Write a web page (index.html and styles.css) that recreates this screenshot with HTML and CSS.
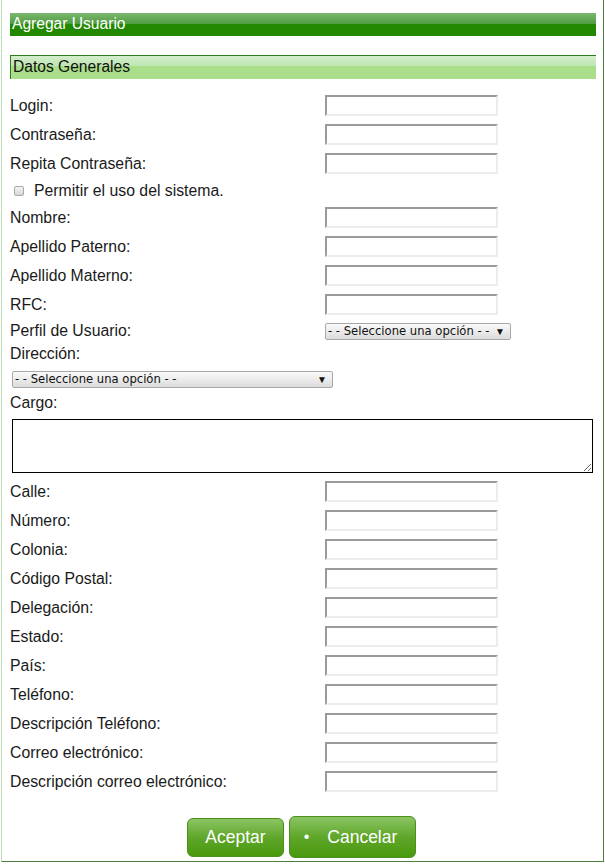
FILE: index.html
```html
<!DOCTYPE html>
<html lang="es">
<head>
<meta charset="utf-8">
<title>Agregar Usuario</title>
<link rel="stylesheet" href="styles.css">
</head>
<body>
<div class="panel">
  <div class="title-bar">Agregar Usuario</div>
  <div class="section-bar">Datos Generales</div>
  <form class="form">
    <div class="row"><label>Login:</label><input type="text" class="field"></div>
    <div class="row"><label>Contraseña:</label><input type="password" class="field"></div>
    <div class="row"><label>Repita Contraseña:</label><input type="password" class="field"></div>
    <div class="check-row"><input type="checkbox" class="check"><span>Permitir el uso del sistema.</span></div>
    <div class="row"><label>Nombre:</label><input type="text" class="field"></div>
    <div class="row"><label>Apellido Paterno:</label><input type="text" class="field"></div>
    <div class="row"><label>Apellido Materno:</label><input type="text" class="field"></div>
    <div class="row"><label>RFC:</label><input type="text" class="field"></div>
    <div class="row row-select"><label>Perfil de Usuario:</label>
      <span class="select-wrap select-short"><select class="select"><option>- - Seleccione una opción - -</option></select></span>
    </div>
    <div class="block-label">Dirección:</div>
    <span class="select-wrap select-long"><select class="select"><option>- - Seleccione una opción - -</option></select></span>
    <div class="block-label cargo">Cargo:</div>
    <textarea class="area"></textarea>
    <div class="rows-bottom">
      <div class="row"><label>Calle:</label><input type="text" class="field"></div>
      <div class="row"><label>Número:</label><input type="text" class="field"></div>
      <div class="row"><label>Colonia:</label><input type="text" class="field"></div>
      <div class="row"><label>Código Postal:</label><input type="text" class="field"></div>
      <div class="row"><label>Delegación:</label><input type="text" class="field"></div>
      <div class="row"><label>Estado:</label><input type="text" class="field"></div>
      <div class="row"><label>País:</label><input type="text" class="field"></div>
      <div class="row"><label>Teléfono:</label><input type="text" class="field"></div>
      <div class="row"><label>Descripción Teléfono:</label><input type="text" class="field"></div>
      <div class="row"><label>Correo electrónico:</label><input type="text" class="field"></div>
      <div class="row"><label>Descripción correo electrónico:</label><input type="text" class="field"></div>
    </div>
    <div class="buttons">
      <button type="button" class="btn btn-ok">Aceptar</button>
      <button type="button" class="btn btn-cancel"><span class="dot">•</span>Cancelar</button>
    </div>
  </form>
</div>
</body>
</html>
```

FILE: styles.css
```css
html, body {
  margin: 0;
  padding: 0;
  background: #fff;
}
body {
  font-family: "Liberation Sans", Arial, sans-serif;
  font-size: 15.8px;
  color: #1a1a1a;
}
.panel {
  box-sizing: border-box;
  margin-left: 1px;
  width: 603px;
  height: 862px;
  border-left: 1px solid #bfe0bb;
  border-right: 1px solid #4f7d3e;
  border-bottom: 1px solid #4f7d3e;
  padding: 13px 7px 0 8px;
}
.title-bar {
  height: 23px;
  line-height: 21px;
  padding-left: 2px;
  color: #fff;
  font-size: 15.6px;
  background: linear-gradient(to bottom, #7cb86f 0%, #4f9b40 48%, #228800 48%, #228800 100%);
}
.section-bar {
  margin-top: 19px;
  height: 24px;
  box-sizing: border-box;
  border-top: 1px solid #2e7d1c;
  border-left: 1px solid #2e7d1c;
  line-height: 22px;
  padding-left: 2px;
  color: #111;
  font-size: 15.6px;
  background: linear-gradient(to bottom, #d3edcc 0%, #bde6b0 45%, #aade8a 45%, #aade8a 100%);
}
.form {
  margin: 12px 0 0 0;
  padding-left: 0;
}
.row {
  display: grid;
  grid-template-columns: 315px auto;
  justify-content: start;
  align-items: center;
  height: 29px;
}
.row label {
  white-space: nowrap;
}
.field {
  box-sizing: border-box;
  width: 173px;
  height: 21px;
  margin: 0;
  padding: 0 2px;
  border-top: 2px solid #9a9a9a;
  border-left: 2px solid #9a9a9a;
  border-bottom: 2px solid #ececec;
  border-right: 2px solid #ececec;
  background: #fff;
  font: 13px "Liberation Sans", Arial, sans-serif;
}
.check-row {
  display: flex;
  align-items: center;
  height: 25px;
  padding-left: 3px;
}
.check {
  appearance: none;
  -webkit-appearance: none;
  box-sizing: border-box;
  width: 10px;
  height: 10px;
  margin: 0 10px 0 1px;
  border: 1px solid #aaa;
  border-radius: 2px;
  background: linear-gradient(to bottom, #f4f4f4, #d6d6d6);
}
.row-select {
  height: 24px;
}
.select-wrap {
  position: relative;
  display: inline-block;
  justify-self: start;
}
.select-wrap::after {
  content: "\25BC";
  position: absolute;
  right: 6px;
  top: 2px;
  font-size: 10px;
  line-height: 13px;
  color: #111;
  pointer-events: none;
}
.select {
  display: block;
  appearance: none;
  -webkit-appearance: none;
  box-sizing: border-box;
  height: 17px;
  margin: 0;
  padding: 0 0 0 2px;
  border: 1px solid #a8a8a8;
  border-radius: 2px;
  background: linear-gradient(to bottom, #fafafa, #dcdcdc);
  font: 11.6px "DejaVu Sans", "Liberation Sans", sans-serif;
  line-height: 15px;
  color: #111;
}
.select-short .select {
  width: 186px;
}
.select-long {
  display: block;
  margin: 6px 0 0 2px;
  width: 321px;
}
.select-long .select {
  width: 321px;
}
.block-label {
  height: 22px;
  line-height: 22px;
}
.cargo {
  margin-top: 4px;
}
.area {
  display: block;
  box-sizing: border-box;
  width: 581px;
  height: 54px;
  margin: 5px 0 0 2px;
  border: 1px solid #000;
  resize: vertical;
  font: 13px "Liberation Sans", Arial, sans-serif;
}
.rows-bottom {
  margin-top: 4px;
}
.buttons {
  display: flex;
  justify-content: center;
  align-items: center;
  gap: 5px;
  margin-top: 20px;
  padding-right: 3px;
}
.btn {
  box-sizing: border-box;
  border: 1px solid #4b8f1c;
  border-radius: 6px;
  color: #fff;
  font: 17.5px "Liberation Sans", Arial, sans-serif;
  background: linear-gradient(to bottom, #8cc563 0%, #5fa62b 50%, #49990d 100%);
  padding: 0;
}
.btn-ok {
  width: 97px;
  height: 39px;
}
.btn-cancel {
  width: 127px;
  height: 42px;
  display: flex;
  align-items: center;
  justify-content: center;
  gap: 0;
}
.dot {
  margin-right: 18px;
  margin-left: -4px;
  font-size: 16px;
}
```
